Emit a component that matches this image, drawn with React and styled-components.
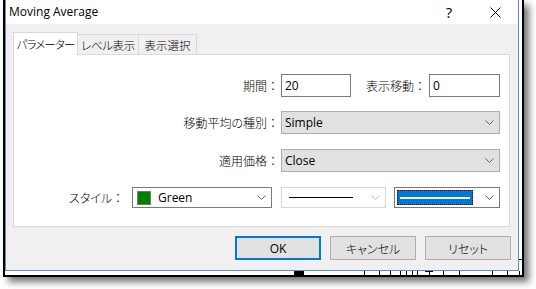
import React from "react";
import styled, { createGlobalStyle } from "styled-components";

const GlobalStyle = createGlobalStyle`
  html, body {
    margin: 0;
    padding: 0;
    background: #ffffff;
  }
  body {
    font-family: "Open Sans", "Noto Sans CJK JP", sans-serif;
    font-size: 12px;
    color: #000;
    font-feature-settings: "palt";
  }
`;

const Page = styled.div`
  padding-left: 3px;
  width: 536px;
  height: 289px;
  box-sizing: border-box;
  overflow: hidden;
`;

const Frame = styled.div`
  width: 521px;
  box-sizing: border-box;
  border: 2px solid #000;
  border-top: none;
  background: #fff;
  box-shadow: 5px 5px 7px rgba(0, 0, 0, 0.55);
`;

const TopRow = styled.div`
  display: flex;
`;

const SideStrip = styled.div`
  width: 3px;
  display: flex;
  flex-direction: column;
  justify-content: flex-end;
`;

const BottomStrip = styled.div`
  height: 4px;
  svg {
    display: block;
  }
`;

const Window = styled.div`
  width: 514px;
  height: 271px;
  box-sizing: border-box;
  border: 1px solid #5d8fc2;
  border-top: none;
  display: flex;
  flex-direction: column;
  background: #f0f0f0;
`;

const TitleBar = styled.div`
  height: 24px;
  background: #fff;
  display: flex;
  align-items: center;
  padding-left: 3px;
`;

const Title = styled.span`
  flex: 1;
  font-size: 12px;
  line-height: 24px;
`;

const TitleButton = styled.span`
  width: 46px;
  height: 24px;
  display: flex;
  align-items: center;
  justify-content: center;
  font-size: 15px;
`;

// Japanese UI text: thin CJK face, like Meiryo UI
const Jp = styled.span`
  font-family: "Noto Sans CJK JP", sans-serif;
  font-weight: 300;
  font-size: ${(p) => p.$size || 12}px;
  letter-spacing: ${(p) => p.$ls || 0}px;
  white-space: nowrap;
`;

// full-width colon keeps its full advance, as in the original UI
const Colon = styled.span`
  font-feature-settings: normal;
`;

const Body = styled.div`
  flex: 1;
  display: flex;
  flex-direction: column;
  padding: 9px 8px 0 7px;
`;

const TabRow = styled.div`
  display: flex;
  align-items: flex-end;
  height: 22px;
  position: relative;
  z-index: 1;
  margin-bottom: -1px;
`;

const Tab = styled.div`
  box-sizing: border-box;
  width: ${(p) => p.$w}px;
  height: ${(p) => (p.$active ? 23 : 21)}px;
  border: 1px solid #d9d9d9;
  border-bottom: ${(p) => (p.$active ? "none" : "1px solid #d9d9d9")};
  background: ${(p) => (p.$active ? "#fff" : "#f0f0f0")};
  display: flex;
  align-items: center;
  justify-content: center;
  padding-bottom: ${(p) => (p.$active ? 1 : 0)}px;
  white-space: nowrap;
  & + & {
    margin-left: -1px;
  }
`;

const Panel = styled.div`
  height: 173px;
  box-sizing: border-box;
  border: 1px solid #d9d9d9;
  background: #fff;
  padding: 19px 9px 0 0;
  display: flex;
  flex-direction: column;
  gap: 14px;
`;

const FieldRow = styled.div`
  display: grid;
  grid-template-columns: 1fr 219px;
  column-gap: 2px;
  align-items: center;
  margin-top: ${(p) => p.$mt || 0}px;
`;

const Label = styled.span`
  text-align: right;
  white-space: nowrap;
`;

const Inline = styled.div`
  display: flex;
  align-items: center;
`;

const InlineLabel = styled.span`
  margin-left: auto;
  margin-right: 3px;
  white-space: nowrap;
`;

const TextInput = styled.div`
  box-sizing: border-box;
  width: ${(p) => p.$w}px;
  height: 23px;
  border: 1px solid #7a7a7a;
  background: #fff;
  padding-left: 3px;
  display: flex;
  align-items: center;
`;

const Combo = styled.div`
  box-sizing: border-box;
  width: ${(p) => p.$w || 219}px;
  height: ${(p) => p.$h || 23}px;
  border: 1px solid ${(p) => p.$border || "#adadad"};
  background: ${(p) => p.$bg || "#e1e1e1"};
  display: flex;
  align-items: center;
  padding-left: 3px;
  gap: 6px;
  margin-left: ${(p) => p.$ml || 0}px;
`;

const ComboValue = styled.span`
  flex: 1;
  display: flex;
  align-items: center;
  gap: 7px;
  min-width: 0;
`;

const Chevron = styled.span`
  width: 20px;
  display: flex;
  justify-content: center;
  align-items: center;
`;

const Swatch = styled.span`
  width: 12px;
  height: 12px;
  background: #008000;
  border: 1px solid #7a7a7a;
  margin-left: 1px;
`;

const StyleRow = styled.div`
  display: flex;
  justify-content: flex-end;
  align-items: center;
  margin-top: 1px;
`;

const StyleLabel = styled.span`
  margin-right: 8px;
  white-space: nowrap;
`;

const LineSample = styled.span`
  flex: 1;
  height: 1px;
  background: #000;
  margin: 0 6px 0 4px;
`;

const FocusBox = styled.span`
  flex: 1;
  height: 15px;
  box-sizing: border-box;
  background: #0078d7;
  outline: 1px dotted #000;
  outline-offset: -1px;
  display: flex;
  align-items: center;
  padding: 0 3px;
  margin-left: -1px;
`;

const FocusLine = styled.span`
  flex: 1;
  height: 2px;
  background: #fff;
`;

const ButtonRow = styled.div`
  display: flex;
  justify-content: flex-end;
  gap: 9px;
  margin-top: 9px;
  margin-right: -1px;
`;

const Button = styled.div`
  box-sizing: border-box;
  width: ${(p) => p.$w || 86}px;
  height: 24px;
  background: #e1e1e1;
  border: ${(p) => (p.$default ? "2px solid #0078d7" : "1px solid #adadad")};
  display: flex;
  align-items: center;
  justify-content: center;
`;

const ChevronIcon = ({ color = "#606060" }) => (
  <svg width="9" height="5" viewBox="0 0 9 5">
    <polyline points="0.5,0.5 4.5,4.5 8.5,0.5" fill="none" stroke={color} strokeWidth="1" />
  </svg>
);

const CloseIcon = () => (
  <svg width="11" height="11" viewBox="0 0 11 11">
    <path d="M0.5 0.5 L10.5 10.5 M10.5 0.5 L0.5 10.5" stroke="#000" strokeWidth="1" />
  </svg>
);

// chart ticks visible under the dialog edge (x is relative to frame inner left = 5)
const ticks = [359, 374, 385, 395, 401, 407, 412, 424, 438, 454, 487, 502];

export default function App() {
  return (
    <>
      <GlobalStyle />
      <Page>
        <Frame>
          <TopRow>
            <Window>
              <TitleBar>
                <Title>Moving Average</Title>
                <TitleButton>?</TitleButton>
                <TitleButton>
                  <CloseIcon />
                </TitleButton>
              </TitleBar>
              <Body>
                <TabRow>
                  <Tab $active $w={65}>
                    <Jp $size={11.5} $ls={-0.9}>パラメーター</Jp>
                  </Tab>
                  <Tab $w={62}>
                    <Jp $size={11.5} $ls={-0.4}>レベル表示</Jp>
                  </Tab>
                  <Tab $w={59}>
                    <Jp $size={11.5}>表示選択</Jp>
                  </Tab>
                </TabRow>
                <Panel>
                  <FieldRow>
                    <Label><Jp>期間<Colon>：</Colon></Jp></Label>
                    <Inline>
                      <TextInput $w={70}>20</TextInput>
                      <InlineLabel><Jp>表示移動<Colon>：</Colon></Jp></InlineLabel>
                      <TextInput $w={71}>0</TextInput>
                    </Inline>
                  </FieldRow>
                  <FieldRow>
                    <Label><Jp>移動平均の種別<Colon>：</Colon></Jp></Label>
                    <Combo>
                      <ComboValue>Simple</ComboValue>
                      <Chevron>
                        <ChevronIcon />
                      </Chevron>
                    </Combo>
                  </FieldRow>
                  <FieldRow $mt={1}>
                    <Label><Jp>適用価格<Colon>：</Colon></Jp></Label>
                    <Combo>
                      <ComboValue>Close</ComboValue>
                      <Chevron>
                        <ChevronIcon />
                      </Chevron>
                    </Combo>
                  </FieldRow>
                  <StyleRow>
                    <StyleLabel><Jp>スタイル<Colon>：</Colon></Jp></StyleLabel>
                    <Combo $w={140} $h={21} $bg="#fff" $border="#7a7a7a">
                      <ComboValue>
                        <Swatch />
                        Green
                      </ComboValue>
                      <Chevron>
                        <ChevronIcon />
                      </Chevron>
                    </Combo>
                    <Combo $w={105} $h={21} $bg="#fff" $border="#d4d4d4" $ml={9}>
                      <LineSample />
                      <Chevron>
                        <ChevronIcon color="#bcbcbc" />
                      </Chevron>
                    </Combo>
                    <Combo $w={106} $h={21} $bg="#fff" $border="#7a7a7a" $ml={8}>
                      <FocusBox>
                        <FocusLine />
                      </FocusBox>
                      <Chevron>
                        <ChevronIcon />
                      </Chevron>
                    </Combo>
                  </StyleRow>
                </Panel>
                <ButtonRow>
                  <Button $default>OK</Button>
                  <Button><Jp>キャンセル</Jp></Button>
                  <Button><Jp>リセット</Jp></Button>
                </ButtonRow>
              </Body>
            </Window>
            <SideStrip>
              <svg width="3" height="271">
                <line x1="0" y1="259.5" x2="3" y2="259.5" stroke="#000" />
              </svg>
            </SideStrip>
          </TopRow>
          <BottomStrip>
            <svg width="517" height="4">
              <rect x="289" y="0" width="10" height="4" fill="#000" />
              {ticks.map((x) => (
                <line key={x} x1={x + 0.5} y1="0" x2={x + 0.5} y2="4" stroke="#000" />
              ))}
              <line x1="420" y1="0.5" x2="428" y2="0.5" stroke="#000" />
              <line x1="514.5" y1="0" x2="514.5" y2="4" stroke="#000" />
            </svg>
          </BottomStrip>
        </Frame>
      </Page>
    </>
  );
}
